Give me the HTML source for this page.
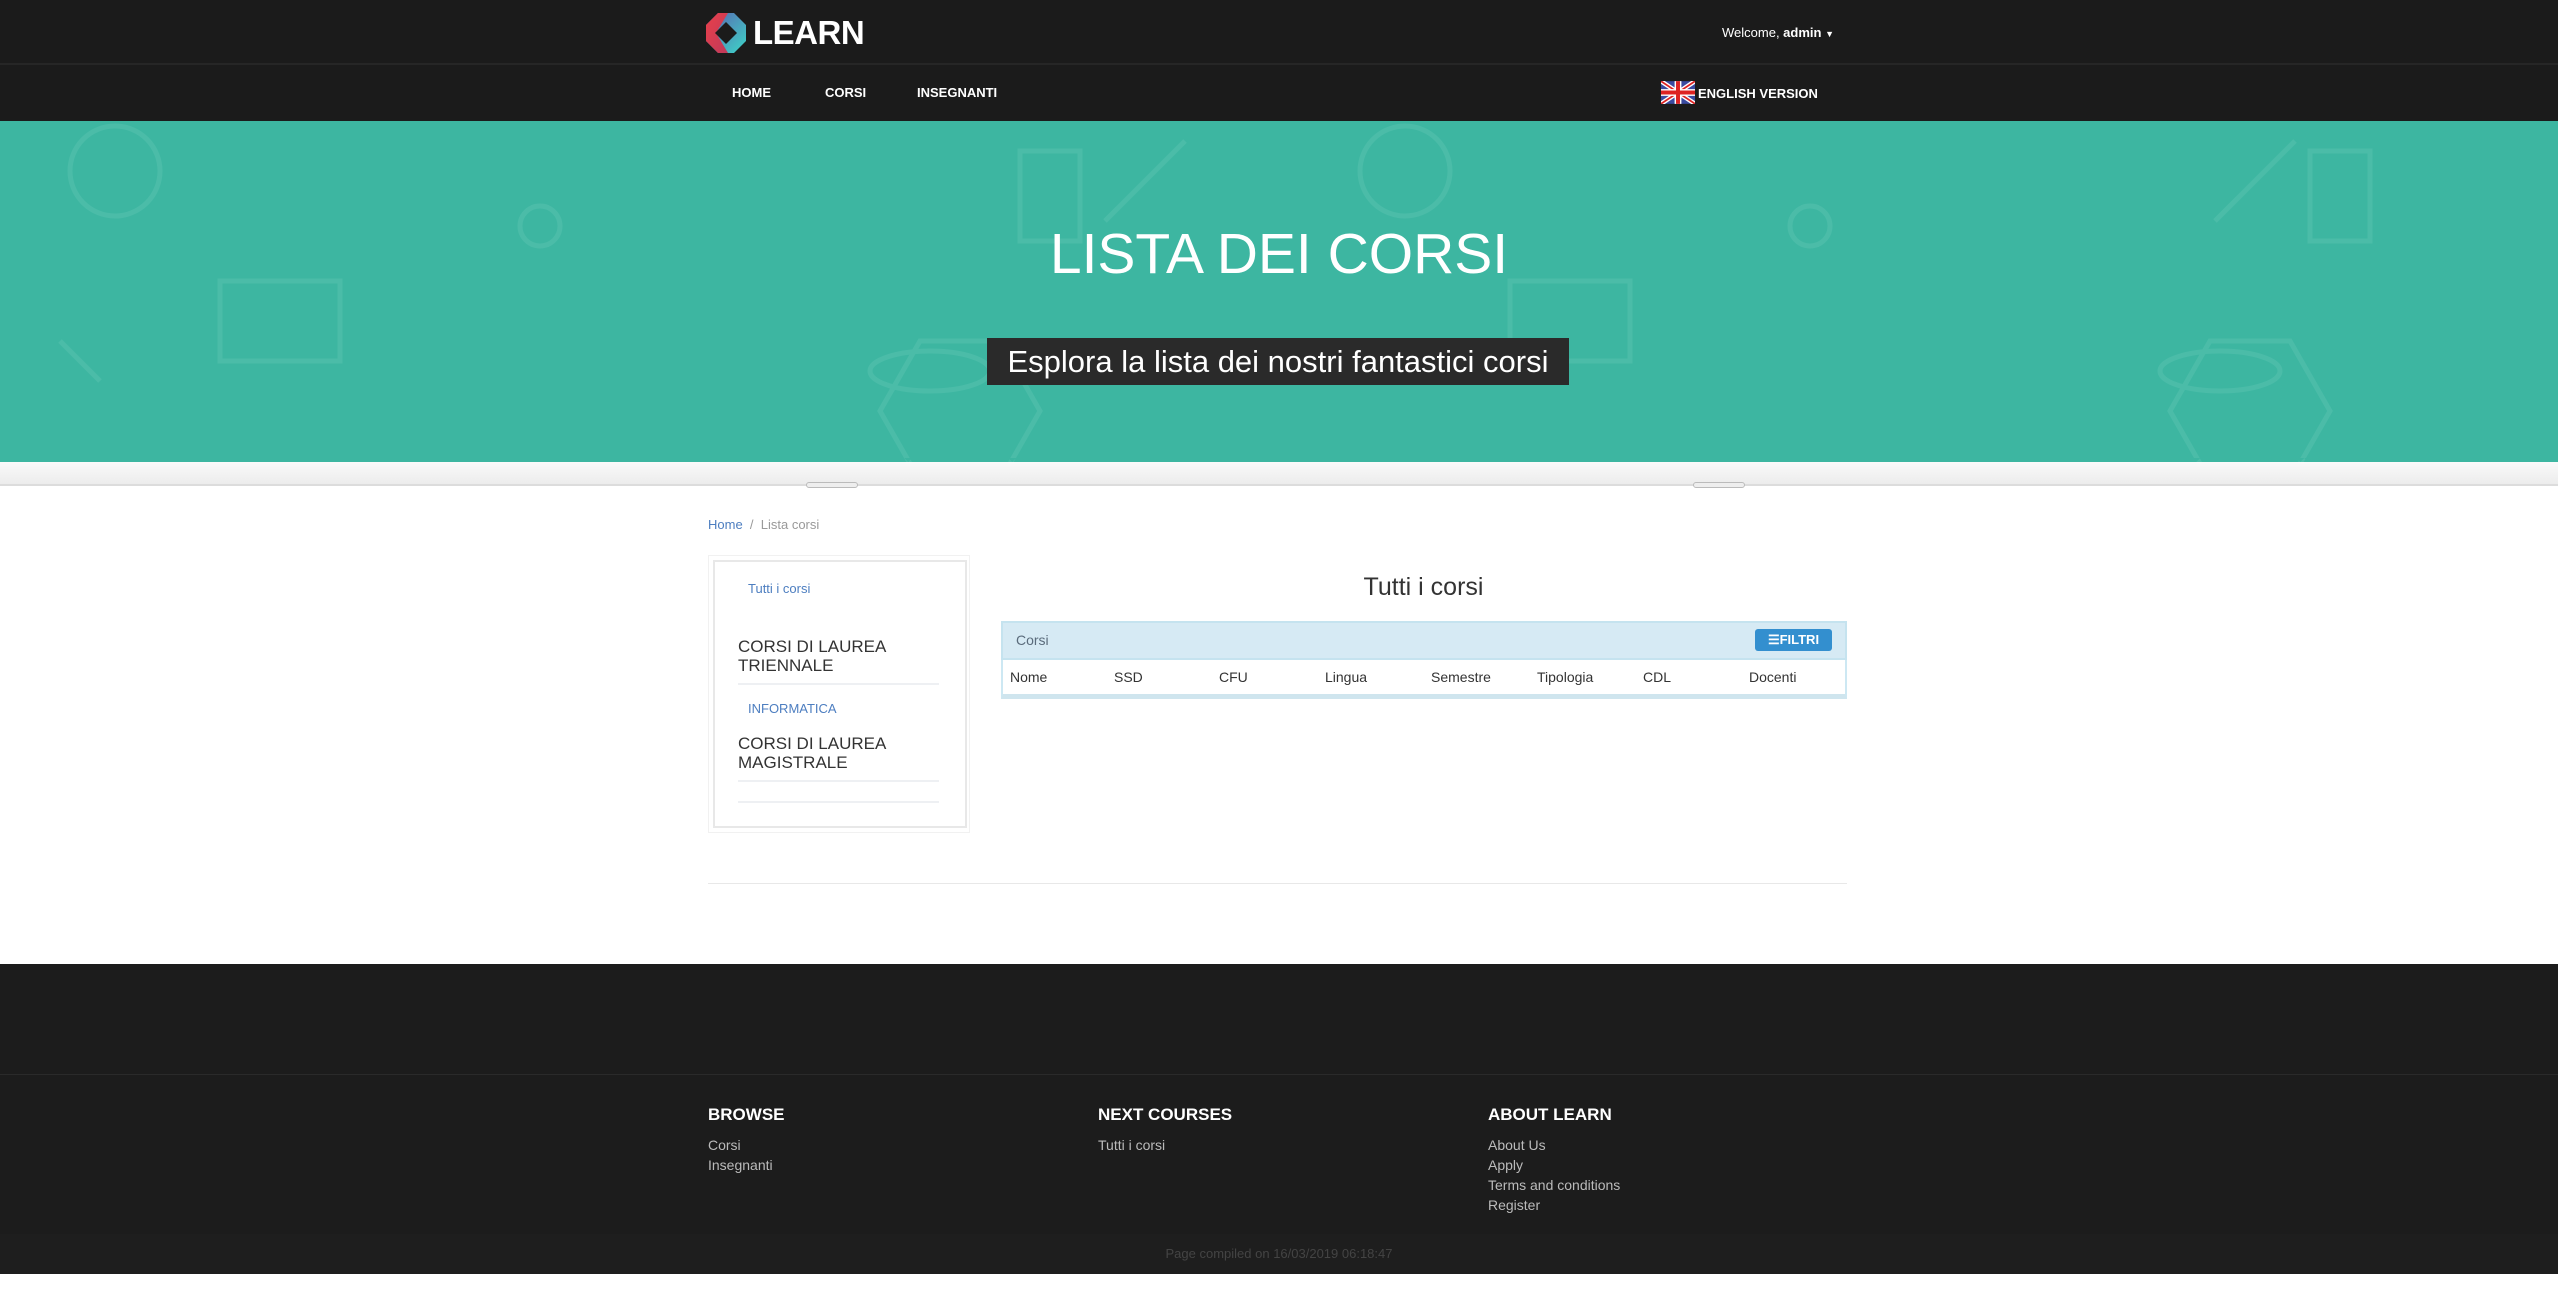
<!DOCTYPE html>
<html><head><meta charset="utf-8"><style>
*{box-sizing:border-box;margin:0;padding:0}
body{width:2558px;height:1295px;background:#fff;font-family:"Liberation Sans",sans-serif;position:relative;overflow:hidden}
.a{position:absolute;white-space:nowrap}
#top{position:absolute;left:0;top:0;width:2558px;height:65px;background:#1b1b1b;border-bottom:2px solid #262626}
#nav{position:absolute;left:0;top:65px;width:2558px;height:56px;background:#1b1b1b}
#hero{position:absolute;left:0;top:121px;width:2558px;height:341px;background:#3db6a1;overflow:hidden}
#zig{position:absolute;left:0;top:458px;width:2558px;height:8px;background:linear-gradient(135deg,#3db6a1 25%,transparent 25%) -4px 0/8px 8px,linear-gradient(225deg,#3db6a1 25%,transparent 25%) -4px 0/8px 8px;background-repeat:repeat-x}
#strip{position:absolute;left:0;top:462px;width:2558px;height:24px;background:linear-gradient(#fafafa,#ececec);border-bottom:2px solid #dcdcdc}
.nv{color:#fff;font-size:13px;font-weight:bold;top:85px}
.th{top:669px;font-size:14px;color:#333}
.fl{color:#bbb;font-size:14px}
.fh{color:#fff;font-size:17px;font-weight:bold;top:1105px}
</style></head><body>
<div id="top"></div><div id="nav"></div>
<svg class="a" style="left:706px;top:13px" width="40" height="40" viewBox="0 0 40 40">
<defs><linearGradient id="g1" x1="0" y1="0" x2="1" y2="1"><stop offset="0" stop-color="#e8404a"/><stop offset="1" stop-color="#c0395a"/></linearGradient><linearGradient id="g2" x1="0" y1="0" x2="1" y2="1"><stop offset="0" stop-color="#5b5fb0"/><stop offset="1" stop-color="#3dd6c8"/></linearGradient></defs>
<polygon points="12,0 28,0 40,12 40,28 28,40 12,40 0,28 0,12" fill="url(#g2)"/>
<polygon points="12,0 22,0 10,20 22,40 12,40 0,28 0,12" fill="url(#g1)"/>
<polygon points="20,9 31,20 20,31 9,20" fill="#1b1b1b"/>
</svg>
<div class="a" style="left:753px;top:14px;color:#fff;font-size:33px;font-weight:bold;letter-spacing:-0.5px">LEARN</div>
<div class="a" style="left:1722px;top:25px;color:#fff;font-size:13px">Welcome, <b>admin</b> <span style="font-size:9px">▼</span></div>
<div class="a nv" style="left:732px">HOME</div>
<div class="a nv" style="left:825px">CORSI</div>
<div class="a nv" style="left:917px">INSEGNANTI</div>
<svg class="a" style="left:1661px;top:81px" width="34" height="23" viewBox="0 0 60 40"><rect width="60" height="40" fill="#3a4aa0"/><path d="M0,0 60,40 M60,0 0,40" stroke="#fff" stroke-width="8"/><path d="M0,0 60,40 M60,0 0,40" stroke="#d22" stroke-width="3"/><path d="M30,0v40M0,20h60" stroke="#fff" stroke-width="12"/><path d="M30,0v40M0,20h60" stroke="#d22" stroke-width="7"/></svg>
<div class="a nv" style="left:1698px;top:86px">ENGLISH VERSION</div>
<div id="hero">
<svg width="2558" height="341" style="position:absolute;left:0;top:0" fill="none" stroke="#5cc4b2" stroke-width="5" opacity=".45">
<circle cx="115" cy="50" r="45"/><circle cx="1405" cy="50" r="45"/><circle cx="540" cy="105" r="20"/><circle cx="1810" cy="105" r="20"/><path d="M220 160h120v80H220zM1510 160h120v80h-120zM1020 30h60v90h-60zM2310 30h60v90h-60zM1185 20l-80 80M2295 20l-80 80M60 220l40 40M880 290l40-70 80 0 40 70-40 70h-80zM2170 290l40-70 80 0 40 70-40 70h-80z"/><ellipse cx="930" cy="250" rx="60" ry="20"/><ellipse cx="2220" cy="250" rx="60" ry="20"/>
</svg>
<div class="a" style="left:0;width:2558px;text-align:center;top:100px;color:#fff;font-size:57px">LISTA DEI CORSI</div>
<div class="a" style="left:987px;top:217px;width:582px;height:47px;background:#2a2a2a;color:#fff;font-size:31px;text-align:center;line-height:47px">Esplora la lista dei nostri fantastici corsi</div>
</div>
<div id="strip"></div><div id="zig"></div>
<div class="a" style="left:806px;top:482px;width:52px;height:6px;border:1px solid #bbb;border-radius:3px;background:#eee"></div>
<div class="a" style="left:1693px;top:482px;width:52px;height:6px;border:1px solid #bbb;border-radius:3px;background:#eee"></div>
<div class="a" style="left:708px;top:517px;font-size:13px;color:#999"><span style="color:#4d7ec0">Home</span> &nbsp;/&nbsp; Lista corsi</div>
<div class="a" style="left:708px;top:555px;width:262px;height:278px;border:1px solid #f1f1f1"></div>
<div class="a" style="left:713px;top:560px;width:254px;height:268px;border:2px solid #e8e8e8"></div>
<div class="a" style="left:748px;top:581px;font-size:13px;color:#4d7ec0">Tutti i corsi</div>
<div class="a" style="left:738px;top:637px;font-size:17px;color:#333;line-height:19px">CORSI DI LAUREA<br>TRIENNALE</div>
<div class="a" style="left:738px;top:683px;width:201px;border-top:2px solid #eef0f3"></div>
<div class="a" style="left:748px;top:701px;font-size:13px;color:#4d7ec0">INFORMATICA</div>
<div class="a" style="left:738px;top:734px;font-size:17px;color:#333;line-height:19px">CORSI DI LAUREA<br>MAGISTRALE</div>
<div class="a" style="left:738px;top:780px;width:201px;border-top:2px solid #eef0f3"></div>
<div class="a" style="left:738px;top:801px;width:201px;border-top:2px solid #eef0f3"></div>
<div class="a" style="left:1000px;width:847px;text-align:center;top:573px;font-size:25px;color:#333">Tutti i corsi</div>
<div class="a" style="left:1001px;top:621px;width:846px;height:78px;border:2px solid #cde8f3;border-bottom:5px solid #cfe5ee"></div>
<div class="a" style="left:1001px;top:621px;width:846px;height:39px;background:#d6eaf4;border:2px solid #c5e3ef"></div>
<div class="a" style="left:1016px;top:632px;font-size:14px;color:#5a6b7b">Corsi</div>
<div class="a" style="left:1755px;top:629px;width:77px;height:22px;background:#338fcf;border-radius:3px;color:#fff;font-size:13px;font-weight:bold;line-height:22px;text-align:center">☰FILTRI</div>
<div class="a th" style="left:1010px">Nome</div><div class="a th" style="left:1114px">SSD</div><div class="a th" style="left:1219px">CFU</div><div class="a th" style="left:1325px">Lingua</div><div class="a th" style="left:1431px">Semestre</div><div class="a th" style="left:1537px">Tipologia</div><div class="a th" style="left:1643px">CDL</div><div class="a th" style="left:1749px">Docenti</div>
<div class="a" style="left:708px;top:883px;width:1139px;border-top:1px solid #e8e8e8"></div>
<div class="a" style="left:0;top:964px;width:2558px;height:310px;background:#1c1c1c"></div>
<div class="a" style="left:0;top:1074px;width:2558px;border-top:1px solid #2a2a2a"></div>
<div class="a" style="left:0;top:1234px;width:2558px;height:40px;background:#1e1e1e"></div>
<div class="a fh" style="left:708px">BROWSE</div><div class="a fh" style="left:1098px">NEXT COURSES</div><div class="a fh" style="left:1488px">ABOUT LEARN</div>
<div class="a fl" style="left:708px;top:1135px;line-height:20px">Corsi<br>Insegnanti</div>
<div class="a fl" style="left:1098px;top:1135px;line-height:20px">Tutti i corsi</div>
<div class="a fl" style="left:1488px;top:1135px;line-height:20px">About Us<br>Apply<br>Terms and conditions<br>Register</div>
<div class="a" style="left:0;width:2558px;text-align:center;top:1246px;font-size:13px;color:#444">Page compiled on 16/03/2019 06:18:47</div>
</body></html>
